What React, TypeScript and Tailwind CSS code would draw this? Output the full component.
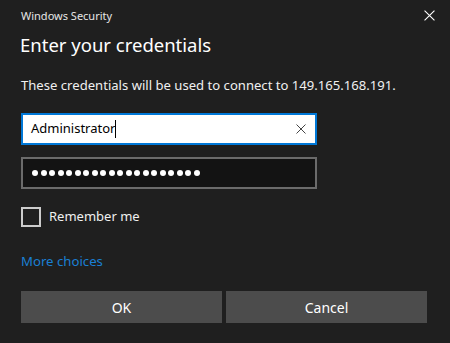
const font = { fontFamily: '"Segoe UI", "Noto Sans", "Open Sans", sans-serif' };

const Dots = ({ count }: { count: number }) => (
  <div className="flex items-center gap-[2.5px]">
    {Array.from({ length: count }).map((_, i) => (
      <span key={i} className="block w-[6px] h-[6px] rounded-full bg-white" />
    ))}
  </div>
);

const Cross = ({ size, className }: { size: number; className?: string }) => (
  <svg width={size} height={size} viewBox="0 0 10 10" className={className}>
    <path d="M0.5 0.5 L9.5 9.5 M9.5 0.5 L0.5 9.5" stroke="currentColor" strokeWidth="1" />
  </svg>
);

export default function App() {
  return (
    <div
      className="w-[450px] h-[343px] bg-[#1f1f1f] text-white overflow-hidden flex flex-col"
      style={font}
    >
      <div className="flex items-center justify-between pl-[21px] pr-[15px] h-[30px]">
        <span className="text-[11px] text-[#e6e6e6] leading-none">Windows Security</span>
        <Cross size={11} className="text-white" />
      </div>

      <h1 className="px-[20px] mt-[1px] text-[18.5px] leading-[28px] font-normal">Enter your credentials</h1>

      <p className="px-[21px] mt-[16px] text-[13.1px] leading-[20px] text-[#f0f0f0]">
        These credentials will be used to connect to 149.165.168.191.
      </p>

      <div className="px-[21px] mt-[18px] flex flex-col gap-[12px]">
        <div className="w-[296px] h-[32px] bg-white border-2 border-[#0078d7] flex items-center pl-[8px] pr-[9px]">
          <span className="text-[13px] text-black flex-1 flex items-center">
            Administrator
            <span className="inline-block w-[1px] h-[18px] bg-black" />
          </span>
          <Cross size={10} className="text-[#444]" />
        </div>
        <div className="w-[296px] h-[32px] bg-[#131313] border-2 border-[#6b6b6b] flex items-center pl-[9px]">
          <Dots count={20} />
        </div>
      </div>

      <label className="px-[21px] mt-[18px] flex items-center gap-[8px]">
        <span className="block w-[20px] h-[20px] border-2 border-[#cccccc]" />
        <span className="text-[13px] text-[#f0f0f0]">Remember me</span>
      </label>

      <a className="px-[21px] mt-[24px] text-[13.2px] text-[#1a7fd4] leading-[20px]">More choices</a>

      <div className="px-[21px] mt-[20px] flex gap-[4px] w-[448px]">
        <button className="flex-1 h-[32px] bg-[#4c4c4c] text-[14px] text-white">OK</button>
        <button className="flex-1 h-[32px] bg-[#4c4c4c] text-[14px] text-white">Cancel</button>
      </div>
    </div>
  );
}
